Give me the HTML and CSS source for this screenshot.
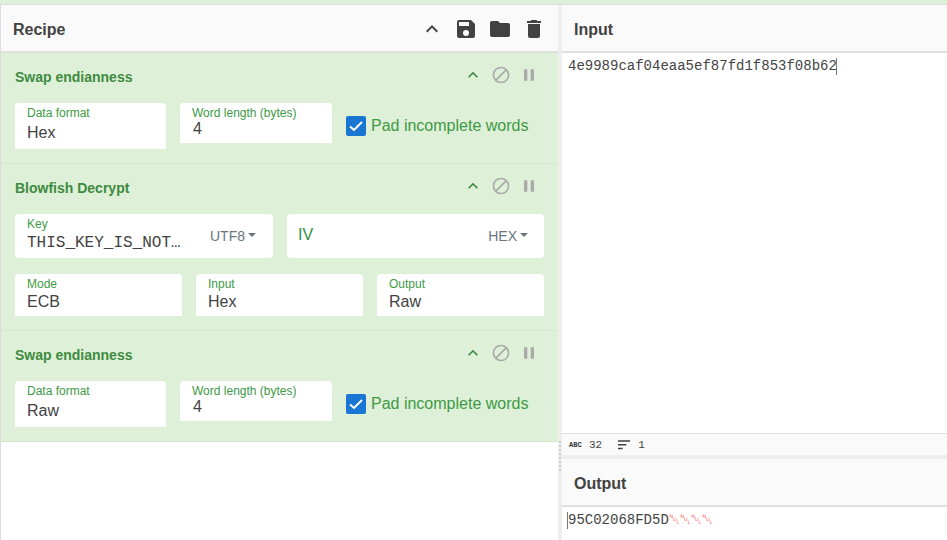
FILE: index.html
```html
<!DOCTYPE html>
<html lang="en">
<head>
<meta charset="utf-8">
<title>Recipe</title>
<link rel="stylesheet" href="styles.css">
</head>
<body>
<div class="topstrip"></div>
<main class="app">
  <section class="recipe">
    <header class="title-bar">
      <h2 class="title">Recipe</h2>
      <div class="title-icons">
        <svg class="ti chev" viewBox="0 0 24 24"><path d="M7.41 15.41 12 10.83l4.59 4.58L18 14l-6-6-6 6z"/></svg>
        <svg class="ti" viewBox="0 0 24 24"><path d="M17 3H5a2 2 0 0 0-2 2v14a2 2 0 0 0 2 2h14a2 2 0 0 0 2-2V7l-4-4zm-5 16a3 3 0 1 1 0-6 3 3 0 0 1 0 6zm3-10H5V5h10v4z"/></svg>
        <svg class="ti" viewBox="0 0 24 24"><path d="M10 4H4a2 2 0 0 0-2 2v12a2 2 0 0 0 2 2h16a2 2 0 0 0 2-2V8a2 2 0 0 0-2-2h-8l-2-2z"/></svg>
        <svg class="ti" viewBox="0 0 24 24"><path d="M6 19a2 2 0 0 0 2 2h8a2 2 0 0 0 2-2V7H6v12zM19 4h-3.5l-1-1h-5l-1 1H5v2h14V4z"/></svg>
      </div>
    </header>

    <article class="op op-swap">
      <div class="op-head">
        <h3 class="op-name">Swap endianness</h3>
        <div class="op-icons">
          <svg class="oi chev-g" viewBox="0 0 24 24"><path d="M7.41 15.41 12 10.83l4.59 4.58L18 14l-6-6-6 6z"/></svg>
          <svg class="oi" viewBox="0 0 24 24"><path d="M12 2a10 10 0 1 0 0 20 10 10 0 0 0 0-20zM4 12a8 8 0 0 1 12.9-6.31L5.69 16.9A7.9 7.9 0 0 1 4 12zm8 8a7.9 7.9 0 0 1-4.9-1.69L18.31 7.1A8 8 0 0 1 12 20z"/></svg>
          <svg class="oi" viewBox="0 0 24 24"><path d="M6 19h4V5H6v14zm8-14v14h4V5h-4z"/></svg>
        </div>
      </div>
      <div class="row row-swap">
        <div class="field f-select"><label class="lab">Data format</label><div class="val">Hex</div></div>
        <div class="field f-num"><label class="lab">Word length (bytes)</label><div class="val">4</div></div>
        <div class="check"><span class="box"><svg viewBox="0 0 20 20"><path d="M4 10.5 8 14 16 6"/></svg></span><span class="check-label">Pad incomplete words</span></div>
      </div>
    </article>

    <article class="op op-blow">
      <div class="op-head">
        <h3 class="op-name">Blowfish Decrypt</h3>
        <div class="op-icons">
          <svg class="oi chev-g" viewBox="0 0 24 24"><path d="M7.41 15.41 12 10.83l4.59 4.58L18 14l-6-6-6 6z"/></svg>
          <svg class="oi" viewBox="0 0 24 24"><path d="M12 2a10 10 0 1 0 0 20 10 10 0 0 0 0-20zM4 12a8 8 0 0 1 12.9-6.31L5.69 16.9A7.9 7.9 0 0 1 4 12zm8 8a7.9 7.9 0 0 1-4.9-1.69L18.31 7.1A8 8 0 0 1 12 20z"/></svg>
          <svg class="oi" viewBox="0 0 24 24"><path d="M6 19h4V5H6v14zm8-14v14h4V5h-4z"/></svg>
        </div>
      </div>
      <div class="row row-key">
        <div class="field f-key">
          <div class="key-main"><label class="lab">Key</label><div class="val mono">THIS_KEY_IS_NOT…</div></div>
          <span class="enc">UTF8<i class="caret"></i></span>
        </div>
        <div class="field f-iv">
          <span class="iv">IV</span>
          <span class="enc">HEX<i class="caret"></i></span>
        </div>
      </div>
      <div class="row row-modes">
        <div class="field f-mode"><label class="lab">Mode</label><div class="val">ECB</div></div>
        <div class="field f-mode"><label class="lab">Input</label><div class="val">Hex</div></div>
        <div class="field f-mode"><label class="lab">Output</label><div class="val">Raw</div></div>
      </div>
    </article>

    <article class="op op-swap op-last">
      <div class="op-head">
        <h3 class="op-name">Swap endianness</h3>
        <div class="op-icons">
          <svg class="oi chev-g" viewBox="0 0 24 24"><path d="M7.41 15.41 12 10.83l4.59 4.58L18 14l-6-6-6 6z"/></svg>
          <svg class="oi" viewBox="0 0 24 24"><path d="M12 2a10 10 0 1 0 0 20 10 10 0 0 0 0-20zM4 12a8 8 0 0 1 12.9-6.31L5.69 16.9A7.9 7.9 0 0 1 4 12zm8 8a7.9 7.9 0 0 1-4.9-1.69L18.31 7.1A8 8 0 0 1 12 20z"/></svg>
          <svg class="oi" viewBox="0 0 24 24"><path d="M6 19h4V5H6v14zm8-14v14h4V5h-4z"/></svg>
        </div>
      </div>
      <div class="row row-swap">
        <div class="field f-select"><label class="lab">Data format</label><div class="val">Raw</div></div>
        <div class="field f-num"><label class="lab">Word length (bytes)</label><div class="val">4</div></div>
        <div class="check"><span class="box"><svg viewBox="0 0 20 20"><path d="M4 10.5 8 14 16 6"/></svg></span><span class="check-label">Pad incomplete words</span></div>
      </div>
    </article>
  </section>

  <div class="gutter"></div>

  <section class="io">
    <div class="pane-input">
      <header class="title-bar io-bar"><h2 class="title">Input</h2></header>
      <div class="text-area"><span>4e9989caf04eaa5ef87fd1f853f08b62</span><i class="cursor in-cursor"></i></div>
      <footer class="status">
        <span class="stat-abc">ABC</span><span class="stat-num">32</span>
        <svg class="stat-lines" viewBox="0 0 14 10"><path d="M0 0h13v1.5H0zM0 4h9v1.5H0zM0 8h5v1.5H0z"/></svg><span class="stat-num">1</span>
      </footer>
    </div>
    <div class="hgutter"></div>
    <div class="pane-output">
      <header class="title-bar io-bar"><h2 class="title">Output</h2></header>
      <div class="text-area out"><i class="cursor out-cursor"></i><span>95C02068FD5D</span><span class="ctrl">␀␀␀␀</span></div>
    </div>
  </section>
</main>
</body>
</html>
```

FILE: styles.css
```css
* { box-sizing: border-box; }
html, body { margin: 0; height: 100%; }
body {
  width: 947px;
  height: 540px;
  overflow: hidden;
  background: #fff;
  font-family: "Liberation Sans", Arial, sans-serif;
  display: flex;
  flex-direction: column;
  color: #424242;
}
.topstrip { height: 4px; flex: none; background: #dff0d8; }
.app { flex: 1; display: flex; min-height: 0; border-top: 1px solid #dcdcdc; }

.recipe { width: 558px; flex: none; border-left: 1px solid #dcdcdc; background: #fff; }
.gutter { width: 4px; flex: none; background: #eeeeee; position: relative; }
.gutter::before {
  content: "";
  position: absolute;
  left: 1px;
  top: 436px;
  width: 2px;
  height: 32px;
  background: repeating-linear-gradient(to bottom, #cfcfcf 0 2px, transparent 2px 4px);
}
.io { flex: 1; min-width: 0; display: flex; flex-direction: column; }

.title-bar {
  height: 48px;
  display: flex;
  align-items: center;
  justify-content: space-between;
  background: #fafafa;
  border-bottom: 2px solid #e0e0e0;
  padding: 4px 12px 0;
}
.title { margin: 0; font-size: 16px; font-weight: 700; color: #424242; }
.title-icons { display: flex; align-items: center; gap: 10px; margin-bottom: 2px; }
.ti { width: 24px; height: 24px; fill: #424242; display: block; }

.op { background: #dff0d8; border-bottom: 1px solid #d5e6cd; padding: 0 14px; color: #3d8b40; }
.op-swap { height: 111px; }
.op-blow { height: 167px; }
.op-last { height: 111px; }
.op-head { height: 50px; display: flex; align-items: center; justify-content: space-between; padding-bottom: 2px; }
.op-name { margin: 0; font-size: 14px; font-weight: 700; color: #3d8b40; }
.op-icons { display: flex; align-items: center; gap: 8px; margin-right: 5px; margin-bottom: 4px; }
.oi { width: 20px; height: 20px; fill: #aaaaaa; display: block; }
.chev-g { fill: #3d8b40; }

.row { display: flex; align-items: flex-start; }
.row-swap { gap: 14px; }
.row-key { gap: 14px; }
.row-modes { gap: 14px; margin-top: 16px; }

.field { background: #fff; border-radius: 4px 4px 0 0; padding: 2px 12px 0; }
.f-select { width: 151px; height: 46px; }
.f-num { width: 152px; height: 40px; }
.f-key { width: 258px; height: 44px; border-radius: 4px; display: flex; justify-content: space-between; padding-right: 17px; }
.f-iv { width: 257px; height: 44px; border-radius: 4px; display: flex; justify-content: space-between; padding: 0 16px 0 11px; align-items: center; }
.f-mode { width: 167px; height: 42px; flex: 1; }

.lab { display: block; font-size: 12px; line-height: 16px; color: #3d9a45; }
.val { font-size: 16px; line-height: 20px; color: #424242; }
.f-select .val { line-height: 22px; margin-top: 1px; }
.f-num .val { line-height: 16px; padding-left: 1px; }
.mono { font-family: "Liberation Mono", monospace; font-size: 16px; line-height: 22px; white-space: nowrap; }
.key-main { min-width: 0; }
.enc { font-size: 14px; color: #6c757d; display: flex; align-items: center; align-self: center; gap: 3px; }
.f-key .enc { margin-bottom: 2px; }
.caret { display: inline-block; width: 0; height: 0; border-left: 4px solid transparent; border-right: 4px solid transparent; border-top: 4px solid #6c757d; margin-bottom: 2px; }
.iv { font-size: 16px; color: #2e9148; margin-top: -3px; }

.check { display: flex; align-items: center; gap: 5px; margin-top: 13px; }
.box { width: 20px; height: 20px; background: #1976d2; border-radius: 2px; display: block; }
.box svg { width: 20px; height: 20px; display: block; fill: none; stroke: #fff; stroke-width: 2; }
.check-label { font-size: 16px; color: #3d9a45; }

.pane-input { height: 450px; display: flex; flex-direction: column; flex: none; }
.hgutter { height: 4px; flex: none; background: #eeeeee; }
.pane-output { flex: 1; display: flex; flex-direction: column; min-height: 0; }
.io-bar { flex: none; }
.text-area { padding: 5px 6px 3px; font-family: "Liberation Mono", monospace; font-size: 14px; line-height: 17px; color: #444; white-space: pre; display: block; }
.pane-input .text-area { flex: 1; }
.cursor { display: inline-block; width: 1px; height: 17px; background: #777; vertical-align: top; }
.in-cursor { margin-left: -1px; }
.out-cursor { margin-left: -1px; }
.ctrl { color: #f44; }

.status { height: 22px; flex: none; background: #fafafa; border-top: 1px solid #e0e0e0; display: flex; align-items: center; padding-left: 7px; font-family: "Liberation Mono", monospace; font-size: 11px; color: #424242; }
.stat-abc { font-size: 7px; font-weight: 700; width: 20px; color: #333; }
.stat-num { margin-right: 16px; }
.stat-lines { width: 13px; height: 10px; fill: #424242; margin-right: 7px; }
```
